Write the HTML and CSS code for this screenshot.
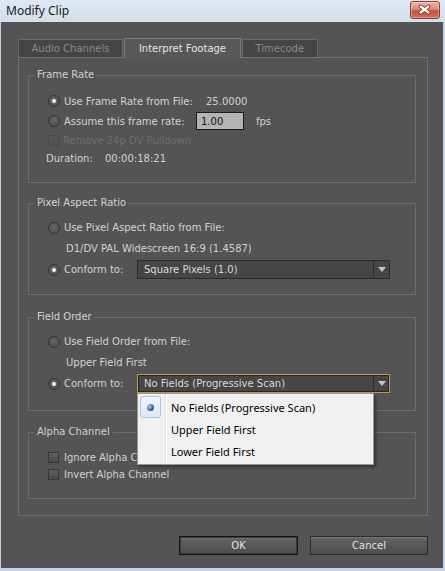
FILE: index.html
```html
<!DOCTYPE html>
<html lang="en">
<head>
<meta charset="utf-8">
<title>Modify Clip</title>
<link rel="stylesheet" href="styles.css">
</head>
<body>
<div class="window">
  <header class="titlebar">
    <span class="title">Modify Clip</span>
    <div class="close" aria-label="Close">
      <svg width="28" height="16" viewBox="0 0 28 16">
        <path d="M9.5 4.5 L17.5 10.5 M17.5 4.5 L9.5 10.5" stroke="#6e2418" stroke-width="3.8" stroke-linecap="round" fill="none"/>
        <path d="M9.5 4.5 L17.5 10.5 M17.5 4.5 L9.5 10.5" stroke="#ffffff" stroke-width="2.2" stroke-linecap="round" fill="none"/>
      </svg>
    </div>
  </header>
  <main class="client">
    <nav class="tabs">
      <div class="tab">Audio Channels</div>
      <div class="tab active">Interpret Footage</div>
      <div class="tab">Timecode</div>
    </nav>
    <div class="panel">
      <section class="group g-frame">
        <h3 class="legend">Frame Rate</h3>
        <div class="row r20"><span class="radio on"></span><span class="lbl w142">Use Frame Rate from File:</span><span>25.0000</span></div>
        <div class="row r20"><span class="radio"></span><span class="lbl w132">Assume this frame rate:</span><input class="num" value="1.00"><span class="unit">fps</span></div>
        <div class="row r18 disabled"><span class="check off"></span><span class="lbl">Remove 24p DV Pulldown</span></div>
        <div class="row r18"><span class="dur-label">Duration:</span><span>00:00:18:21</span></div>
      </section>
      <section class="group g-par">
        <h3 class="legend">Pixel Aspect Ratio</h3>
        <div class="row"><span class="radio"></span><span class="lbl">Use Pixel Aspect Ratio from File:</span></div>
        <div class="row"><span class="info">D1/DV PAL Widescreen 16:9 (1.4587)</span></div>
        <div class="row"><span class="radio on"></span><span class="lbl w73">Conform to:</span>
          <div class="select"><span class="select-text">Square Pixels (1.0)</span><span class="select-arrow"><i class="tri"></i></span></div>
        </div>
      </section>
      <section class="group g-field">
        <h3 class="legend">Field Order</h3>
        <div class="row"><span class="radio"></span><span class="lbl">Use Field Order from File:</span></div>
        <div class="row"><span class="info">Upper Field First</span></div>
        <div class="row"><span class="radio on"></span><span class="lbl w73">Conform to:</span>
          <div class="select focus"><span class="select-text">No Fields (Progressive Scan)</span><span class="select-arrow"><i class="tri"></i></span>
            <ul class="menu">
              <li class="mi"><span class="mi-icon sel"><i class="dot"></i></span><span class="mi-text">No Fields (Progressive Scan)</span></li>
              <li class="mi"><span class="mi-icon"></span><span class="mi-text">Upper Field First</span></li>
              <li class="mi"><span class="mi-icon"></span><span class="mi-text">Lower Field First</span></li>
            </ul>
          </div>
        </div>
      </section>
      <section class="group g-alpha">
        <h3 class="legend">Alpha Channel</h3>
        <div class="row r17"><span class="check"></span><span class="lbl l5">Ignore Alpha Channel</span></div>
        <div class="row r17"><span class="check"></span><span class="lbl l5">Invert Alpha Channel</span></div>
      </section>
    </div>
    <div class="buttons">
      <button class="btn btn-default">OK</button>
      <button class="btn">Cancel</button>
    </div>
  </main>
</div>
</body>
</html>
```
FILE: styles.css
```css
* { box-sizing: border-box; }
html, body { margin: 0; padding: 0; }
body {
  width: 445px;
  height: 571px;
  overflow: hidden;
  font-family: "DejaVu Sans", sans-serif;
  font-size: 10px;
}
.window {
  width: 445px;
  height: 571px;
  display: flex;
  flex-direction: column;
  background: #c4d4e6;
}
.titlebar {
  height: 22px;
  flex: none;
  display: flex;
  align-items: flex-start;
  justify-content: space-between;
  padding: 0 5px 0 6px;
  background: linear-gradient(#dfe8f2, #d3dfec);
}
.title {
  font-family: "Noto Sans", "DejaVu Sans", sans-serif;
  font-size: 12px;
  line-height: 22px;
  color: #1a1a1a;
}
.close {
  margin-top: 1px;
  width: 30px;
  height: 18px;
  border: 1px solid #8b3a2c;
  border-radius: 3px;
  background: linear-gradient(#eab3a6 0%, #dc8a78 45%, #c8523c 55%, #d0705a 100%);
  box-shadow: inset 0 0 0 1px rgba(255, 255, 255, 0.35);
}
.close svg { display: block; }
.client {
  flex: 1;
  margin: 0 2px 3px 1px;
  background: #545454;
  padding: 16px 15px 0 17px;
  display: flex;
  flex-direction: column;
}
.tabs {
  display: flex;
  align-items: flex-end;
  gap: 1px;
}
.tab {
  height: 18px;
  line-height: 17px;
  padding: 0 12.5px;
  border: 1px solid #6a6a6a;
  border-bottom: none;
  background: #454545;
  color: #8a8a8a;
  white-space: nowrap;
}
.tab.active {
  height: 20px;
  line-height: 19px;
  padding: 0 14px;
  margin-bottom: -1px;
  background: #585858;
  border-color: #7a7a7a;
  color: #e4e4e4;
  position: relative;
  z-index: 1;
}
.panel {
  border: 1px solid #707070;
  padding: 17px 11px 16px 9px;
  display: flex;
  flex-direction: column;
}
.group {
  position: relative;
  border: 1px solid #6b6b6b;
  padding: 13px 10px 14px 19px;
}
.g-frame { padding-top: 15px; padding-bottom: 15px; }
.g-par { margin-top: 20px; }
.g-field { margin-top: 22px; padding-bottom: 16px; }
.g-alpha { margin-top: 21px; padding-top: 16px; padding-bottom: 15px; }
.legend {
  position: absolute;
  top: -8px;
  left: 5px;
  margin: 0;
  padding: 0 3px;
  background: #545454;
  font-size: 10px;
  font-weight: normal;
  line-height: 14px;
  color: #d2d2d2;
}
.row {
  display: flex;
  align-items: center;
  height: 21px;
  color: #d2d2d2;
  white-space: nowrap;
}
.r20 { height: 20px; }
.r18 { height: 18px; }
.r17 { height: 17px; }
.disabled { color: #6e6e6e; }
.lbl { margin-left: 4px; }
.l5 { margin-left: 5px; }
.w142 { width: 142px; flex: none; }
.w132 { width: 132px; flex: none; }
.w73 { width: 73px; flex: none; }
.info { margin-left: 18px; }
.dur-label { width: 59px; margin-left: -2px; flex: none; }
.radio {
  flex: none;
  width: 12px;
  height: 12px;
  border-radius: 50%;
  border: 1px solid #353535;
  background: radial-gradient(circle at 50% 40%, #676767, #474747);
}
.radio.on {
  background:
    radial-gradient(circle, #f0f0f0 0 1.4px, #a8a8a8 2px, rgba(0,0,0,0) 2.6px),
    radial-gradient(circle at 50% 40%, #676767, #474747);
}
.check {
  flex: none;
  width: 11px;
  height: 11px;
  border: 1px solid #373737;
  background: linear-gradient(#606060, #4b4b4b);
}
.check.off {
  border-color: #4a4a4a;
  background: linear-gradient(#575757, #505050);
}
.num {
  flex: none;
  width: 48px;
  height: 18px;
  margin: 0;
  border: 1px solid #1b1b1b;
  background: #b4b4b4;
  color: #111111;
  padding: 0 0 0 4px;
  font-family: "DejaVu Sans", sans-serif;
  font-size: 10px;
  line-height: 16px;
  outline: none;
}
.unit { margin-left: 12px; }
.select {
  flex: none;
  position: relative;
  width: 253px;
  height: 19px;
  border: 1px solid #2b2b2b;
  background: #464646;
  display: flex;
  align-items: center;
  color: #d8d8d8;
}
.select.focus {
  border-color: #c39b3b;
  box-shadow: inset 0 0 0 1px #262626;
}
.select-text {
  flex: 1;
  padding-left: 6px;
}
.select-arrow {
  flex: none;
  width: 16px;
  height: 100%;
  border-left: 1px solid #2e2e2e;
  display: flex;
  align-items: center;
  justify-content: center;
}
.tri {
  width: 0;
  height: 0;
  border-left: 4px solid transparent;
  border-right: 4px solid transparent;
  border-top: 5px solid #c6c6c6;
}
.menu {
  position: absolute;
  top: calc(100% + 1px);
  left: -1px;
  z-index: 5;
  width: 237px;
  margin: 0;
  padding: 2px;
  list-style: none;
  border: 1px solid #979797;
  background:
    linear-gradient(to right, rgba(0,0,0,0) 27px, #e2e3e3 27px, #e2e3e3 28px, #ffffff 28px, #ffffff 29px, rgba(0,0,0,0) 29px),
    #f0f0f0;
  box-shadow: 2px 2px 3px rgba(0, 0, 0, 0.4);
  font-family: "Noto Sans", "DejaVu Sans", sans-serif;
  font-size: 11px;
  color: #000000;
}
.mi {
  height: 22px;
  display: flex;
  align-items: center;
}
.mi-icon {
  flex: none;
  width: 21px;
  height: 22px;
}
.mi-icon.sel {
  border: 1px solid #a9c3e2;
  border-radius: 3px;
  background: linear-gradient(#f1f6fc, #dde8f5);
  display: flex;
  align-items: center;
  justify-content: center;
}
.dot {
  width: 7px;
  height: 7px;
  border-radius: 50%;
  background: radial-gradient(circle at 35% 35%, #b8c8e8 0, #4a68aa 55%, #1c3268 100%);
}
.mi-text { margin-left: 10px; }
.buttons {
  display: flex;
  justify-content: flex-end;
  gap: 12px;
  margin-top: 20px;
}
.btn {
  width: 118px;
  height: 19px;
  margin: 0;
  padding: 0;
  border: 1px solid #2a2a2a;
  background: linear-gradient(#676767, #575757 50%, #4e4e4e);
  box-shadow: inset 0 1px 0 #777777;
  color: #e2e2e2;
  font-family: "DejaVu Sans", sans-serif;
  font-size: 10px;
  line-height: 17px;
}
.btn-default {
  width: 119px;
  border-color: #151515;
  box-shadow: inset 0 0 0 1px #3a3a3a, inset 0 2px 0 #6e6e6e;
}
```
